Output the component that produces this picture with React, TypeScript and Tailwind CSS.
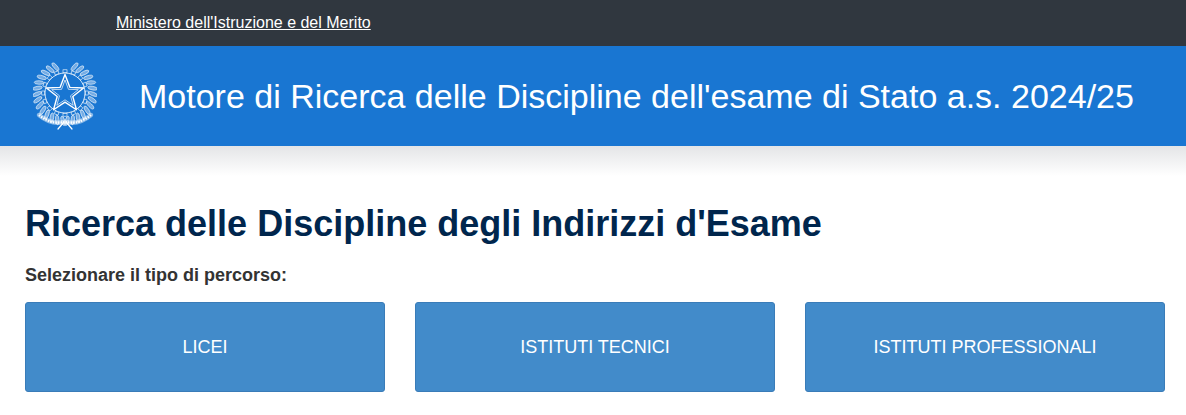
import React from "react";

function Emblem() {
  const cx0 = 32;
  const cy0 = 33;
  const leaves = (side: number) =>
    Array.from({ length: 14 }).map((_, i) => {
      const deg = -70 + i * 12;
      const a = (deg * Math.PI) / 180;
      const r = 28;
      const cx = cx0 + side * r * Math.cos(a);
      const cy = cy0 + r * Math.sin(a);
      const rot = side * (deg + 90 + 20);
      return (
        <ellipse key={i} cx={cx} cy={cy} rx="1.8" ry="4.8" transform={`rotate(${rot} ${cx} ${cy})`} fill="#ffffff" fillOpacity="0.4" stroke="#fff" strokeWidth="0.55" />
      );
    });
  const teeth = Array.from({ length: 16 }).map((_, i) => {
    const a = (i * 360) / 16;
    return <rect key={i} x={cx0 - 2} y={cy0 - 23.2} width="4" height="3" fill="none" stroke="#fff" strokeWidth="0.6" transform={`rotate(${a} ${cx0} ${cy0})`} />;
  });
  const star = (R: number, r: number) =>
    Array.from({ length: 10 })
      .map((_, i) => {
        const a = ((-90 + i * 36) * Math.PI) / 180;
        const rad = i % 2 === 0 ? R : r;
        return `${(cx0 + rad * Math.cos(a)).toFixed(2)},${(cy0 + 1 + rad * Math.sin(a)).toFixed(2)}`;
      })
      .join(" ");
  return (
    <svg width="64" height="72" viewBox="0 0 64 72" className="block shrink-0">
      {leaves(-1)}
      {leaves(1)}
      {teeth}
      <circle cx={cx0} cy={cy0} r="20" fill="#1976d2" stroke="#fff" strokeWidth="0.8" />
      <polygon points={star(19.5, 8.2)} fill="#1976d2" stroke="#fff" strokeWidth="1.4" strokeLinejoin="round" />
      <polygon points={star(14, 5.8)} fill="none" stroke="#fff" strokeWidth="0.7" />
      <path d="M6 55 Q18 65 31 62 M58 55 Q46 65 33 62" fill="none" stroke="#fff" strokeWidth="4.4" strokeLinecap="round" opacity="0.5" />
      <path d="M6 55 Q18 65 31 62 M58 55 Q46 65 33 62" fill="none" stroke="#fff" strokeWidth="2.2" strokeDasharray="1.5 1.1" />
      <path d="M31 62 L25 69 M33 62 L39 69" fill="none" stroke="#fff" strokeWidth="1.2" strokeLinecap="round" />
    </svg>
  );
}

const buttons = ["LICEI", "ISTITUTI TECNICI", "ISTITUTI PROFESSIONALI"];

export default function App() {
  return (
    <div className="min-h-[415px] bg-white font-['Liberation_Sans',Arial,sans-serif] overflow-hidden">
      <div className="h-[46px] bg-[#30373f] flex items-center pl-[116px]">
        <a href="#" className="text-white text-[16px] underline">Ministero dell'Istruzione e del Merito</a>
      </div>
      <div className="h-[100px] bg-[#1976d2] flex items-center pl-[33px]">
        <Emblem />
        <h1 className="ml-[42px] text-white text-[34px] font-normal whitespace-nowrap">Motore di Ricerca delle Discipline dell'esame di Stato a.s. 2024/25</h1>
      </div>
      <div className="h-[30px] bg-gradient-to-b from-[#e4e5e7] to-white" />
      <div className="px-[25px] pr-[21px] pt-[28px]">
        <h2 className="text-[36px] leading-[40px] font-bold text-[#00264d]">Ricerca delle Discipline degli Indirizzi d'Esame</h2>
        <p className="mt-[19px] text-[18px] leading-[24px] font-bold text-[#333333]">Selezionare il tipo di percorso:</p>
        <div className="mt-[15px] grid grid-cols-3 gap-[30px]">
          {buttons.map((b) => (
            <button key={b} className="h-[90px] rounded-[3px] border border-[#3a7cb8] bg-[#428bca] text-white text-[18px]">{b}</button>
          ))}
        </div>
      </div>
    </div>
  );
}
